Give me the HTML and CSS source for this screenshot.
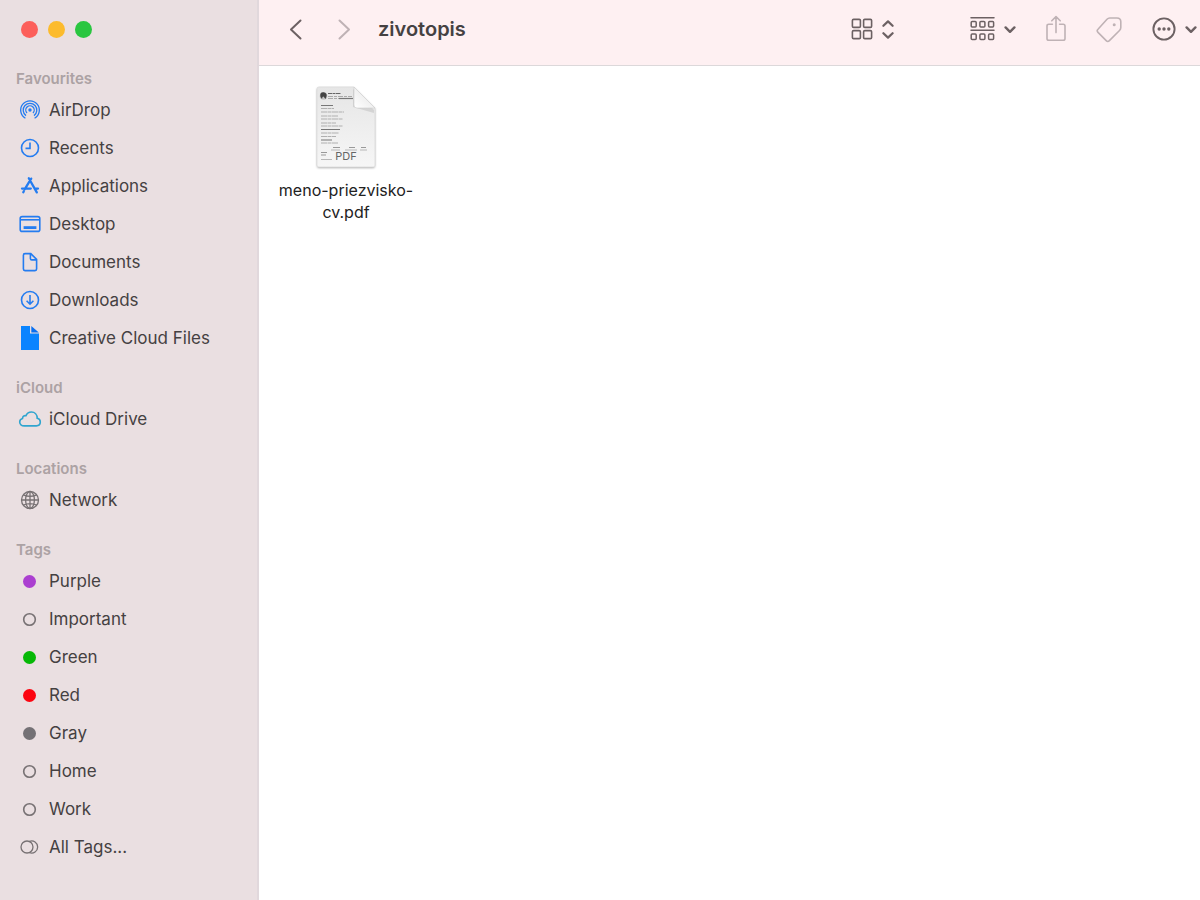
FILE: index.html
```html
<!DOCTYPE html>
<html lang="en">
<head>
<meta charset="utf-8">
<meta name="viewport" content="width=device-width, initial-scale=1">
<title>zivotopis</title>
<link rel="stylesheet" href="styles.css">
</head>
<body>
<div class="window">
  <aside class="sidebar">
    <div class="controls">
      <button class="control close" aria-label="Close"></button>
      <button class="control minimise" aria-label="Minimise"></button>
      <button class="control zoom" aria-label="Zoom"></button>
    </div>
    <nav class="sections">
      <section>
        <h2 class="heading">Favourites</h2>
        <ul class="list">
          <li><a class="item" href="#airdrop"><svg class="icon blue" viewBox="0 0 24 24"><g stroke-width="1.3"><path d="M7.4 20.2A9.3 9.300 0 1 1 16.600 20.200M8 17.600A6.800 6.800 0 1 1 16 17.600M9 15A4.200 4.200 0 1 1 15 15"/></g><circle class="fill" cx="12" cy="12" r="1.700"/></svg>AirDrop</a></li>
          <li><a class="item" href="#recents"><svg class="icon blue" viewBox="0 0 24 24"><circle cx="12" cy="12" r="8.5"/><path d="M12 6.5V12.4H7.5"/></svg>Recents</a></li>
          <li><a class="item" href="#applications"><svg class="icon blue" viewBox="0 0 24 24"><path stroke-width="2.3" stroke-linecap="round" d="M13.2 4.600L6.800 15.200M10.800 4.300L18.800 18.400M4 14.600H12.800M17 14.600H20M5.800 17.200L5.300 18.200"/></svg>Applications</a></li>
          <li><a class="item" href="#desktop"><svg class="icon blue" viewBox="0 0 24 24"><rect x="2.2" y="4.6" width="19.6" height="14.8" rx="2"/><path d="M2.2 7.8H21.8"/><path stroke-width="2.8" d="M5.6 15.6H18.4"/></svg>Desktop</a></li>
          <li><a class="item" href="#documents"><svg class="icon blue" viewBox="0 0 24 24"><path d="M7 3.6H12.8L18.6 9.4V19C18.6 20 18 20.6 17 20.6H7C6 20.6 5.4 20 5.4 19V5.2C5.4 4.2 6 3.6 7 3.6ZM12.4 3.8V8.4C12.4 9.4 12.9 9.9 13.8 9.9H18.4"/></svg>Documents</a></li>
          <li><a class="item" href="#downloads"><svg class="icon blue" viewBox="0 0 24 24"><circle cx="12" cy="12" r="8.5"/><path d="M12 7V16M8.6 12.8L12 16.2L15.4 12.8"/></svg>Downloads</a></li>
          <li><a class="item" href="#creative-cloud"><svg class="icon" viewBox="0 0 24 24"><path fill="#0a84ff" d="M3 0H12V7.5H21V24H3Z"/><path fill="#0a6ff0" d="M13.3 0L20.8 6.5H13.3Z"/></svg>Creative Cloud Files</a></li>
        </ul>
      </section>
      <section>
        <h2 class="heading">iCloud</h2>
        <ul class="list">
          <li><a class="item" href="#icloud-drive"><svg class="icon cyan" viewBox="0 0 24 24"><path d="M6.2 18.9H18.3C20.7 18.9 22.3 17.2 22.3 15.1C22.3 13.1 21 11.6 19.2 11.3C19.2 7.6 16.7 5 13.4 5C10.8 5 9 6.4 8 8.7C6 8.3 4.6 9.6 4.5 11.5C2.8 12 1.7 13.4 1.7 15C1.7 17.2 3.6 18.9 6.2 18.9Z"/></svg>iCloud Drive</a></li>
        </ul>
      </section>
      <section>
        <h2 class="heading">Locations</h2>
        <ul class="list">
          <li><a class="item" href="#network"><svg class="icon grey thin" viewBox="0 0 24 24"><circle cx="12" cy="12" r="8.5"/><ellipse cx="12" cy="12" rx="4.4" ry="8.5"/><path d="M12 3.5V20.5M3.5 12H20.5M5.4 6.8Q12 9.8 18.6 6.8M5.4 17.2Q12 14.2 18.6 17.2"/></svg>Network</a></li>
        </ul>
      </section>
      <section>
        <h2 class="heading">Tags</h2>
        <ul class="list">
          <li><a class="item" href="#purple"><span class="dot purple"></span>Purple</a></li>
          <li><a class="item" href="#important"><svg class="icon grey" viewBox="0 0 24 24"><circle cx="11.5" cy="12.5" r="5.8"/></svg>Important</a></li>
          <li><a class="item" href="#green"><span class="dot green"></span>Green</a></li>
          <li><a class="item" href="#red"><span class="dot red"></span>Red</a></li>
          <li><a class="item" href="#gray"><span class="dot gray"></span>Gray</a></li>
          <li><a class="item" href="#home"><svg class="icon grey" viewBox="0 0 24 24"><circle cx="11.5" cy="12.5" r="5.8"/></svg>Home</a></li>
          <li><a class="item" href="#work"><svg class="icon grey" viewBox="0 0 24 24"><circle cx="11.5" cy="12.5" r="5.8"/></svg>Work</a></li>
          <li><a class="item" href="#all-tags"><svg class="icon grey thin" viewBox="0 0 24 24"><circle cx="9" cy="12" r="6"/><path d="M11.500 6.400A6 6 0 1 1 11.500 17.600"/></svg>All Tags...</a></li>
        </ul>
      </section>
    </nav>
  </aside>
  <div class="content">
    <header class="toolbar">
      <div class="history">
        <button class="tool" aria-label="Back"><svg width="16" height="24" viewBox="0 0 16 24"><path d="M12.5 3.5L3 12.5L12.5 21.5" stroke-width="2"/></svg></button>
        <button class="tool faded" aria-label="Forward"><svg width="16" height="24" viewBox="0 0 16 24"><path d="M3.5 3.5L13 12.5L3.5 21.5" stroke-width="2"/></svg></button>
      </div>
      <h1 class="title">zivotopis</h1>
      <div class="views">
        <button class="tool" aria-label="View as icons"><svg width="22" height="24" viewBox="0 0 22 24"><g stroke-width="1.6"><rect x="1.4" y="2.4" width="8" height="8" rx="1.2"/><rect x="12.6" y="2.4" width="8" height="8" rx="1.2"/><rect x="1.4" y="13.6" width="8" height="8" rx="1.2"/><rect x="12.6" y="13.6" width="8" height="8" rx="1.2"/></g></svg><svg width="12" height="24" viewBox="0 0 12 24"><path stroke-width="2.2" d="M1.4 8.8L6 4.4L10.6 8.8M1.4 16.2L6 20.6L10.6 16.2"/></svg></button>
        <button class="tool" aria-label="Group"><svg width="25" height="26" viewBox="0 0 25 26"><g stroke-width="1.5"><path d="M1 1.800H24M1 14.300H24"/><rect x="1.2" y="5.600" width="5" height="5.4" rx="1"/><rect x="9.9" y="5.600" width="5" height="5.4" rx="1"/><rect x="18.6" y="5.600" width="5" height="5.4" rx="1"/><rect x="1.2" y="18" width="5" height="5.4" rx="1"/><rect x="9.9" y="18" width="5" height="5.4" rx="1"/><rect x="18.6" y="18" width="5" height="5.4" rx="1"/></g></svg><svg width="12" height="24" viewBox="0 0 12 24"><path stroke-width="2.4" d="M1.6 10.4L6 14.8L10.4 10.4"/></svg></button>
      </div>
      <div class="actions">
        <button class="tool faded" aria-label="Share"><svg width="20" height="28" viewBox="0 0 20 28"><path stroke-width="1.6" d="M6.4 9.200H2.8C1.6 9.200 1 9.800 1 11V23.400C1 24.600 1.6 25.200 2.8 25.200H17.2C18.4 25.200 19 24.600 19 23.400V11C19 9.800 18.4 9.200 17.2 9.200H13.6M10 17.600V1.800M5.8 5.800L10 1.600L14.2 5.800"/></svg></button>
        <button class="tool faded" aria-label="Tags"><svg width="26" height="28" viewBox="0 0 26 28"><path stroke-width="1.6" d="M13.8 3H21C23.4 3 24.8 4.4 24.8 6.8V12.4C24.8 13.8 24.4 14.6 23.5 15.5L13.4 25.6C12.3 26.7 11.3 26.7 10.2 25.6L2 17.4C.9 16.3 .9 15.3 2 14.2L11 4.3C11.8 3.4 12.6 3 13.8 3Z"/><circle class="fill" cx="18.2" cy="9.800" r="1.5"/></svg></button>
        <button class="tool" aria-label="More"><svg width="24" height="24" viewBox="0 0 24 24"><circle cx="12" cy="12" r="10.6" stroke-width="1.9"/><circle class="fill" cx="7.2" cy="12" r="1.7"/><circle class="fill" cx="12" cy="12" r="1.7"/><circle class="fill" cx="16.8" cy="12" r="1.7"/></svg><svg width="12" height="24" viewBox="0 0 12 24"><path stroke-width="2.4" d="M1.6 10.4L6 14.8L10.4 10.4"/></svg></button>
      </div>
    </header>
    <main class="files">
      <a class="file" href="#meno-priezvisko-cv">
        <svg class="thumb" width="64" height="88" viewBox="0 0 64 88">
          <defs>
            <linearGradient id="fold" x1="0" y1="1" x2="1" y2="0"><stop offset="0" stop-color="#fff"/><stop offset=".5" stop-color="#f0f0f0"/><stop offset="1" stop-color="#ccc"/></linearGradient>
            <linearGradient id="paper" x1="0" y1="0" x2="0" y2="1"><stop offset="0" stop-color="#e6e6e6"/><stop offset="1" stop-color="#f6f6f6"/></linearGradient>
          </defs>
          <path class="page-shadow" d="M5 4H40L61 25V82Q61 84 59 84H5Q3 84 3 82V6Q3 4 5 4Z"/>
          <path fill="url(#paper)" stroke="#d8d8d8" stroke-width=".7" d="M5 4H40L61 25V82Q61 84 59 84H5Q3 84 3 82V6Q3 4 5 4Z"/>
          <circle cx="9.5" cy="13" r="3.8" fill="#c4c4c4"/>
          <path fill="#444" d="M6.500 14Q5.300 9 9.500 9.200Q13.500 10 12.500 13.500L11.500 16L9.500 13.500L8.500 14L8 16Z"/>
          <g fill="none" stroke="#888" stroke-width="1.200">
            <path d="M14 10.500H27" stroke="#666" stroke-dasharray="4 .5 3 .5"/>
            <path d="M14 13.500H38M14 15.500H26" stroke="#aaa" stroke-dasharray="5 1 3 1"/>
            <path d="M25 15.500H39" stroke="#777"/>
            <path d="M7 22.500H19M7 46.500H26M7 57H18" stroke="#777"/>
            <path d="M7 25.500H20M7 29H30M7 33H24M7 36H29M7 40H22M7 43H29M7 50H25M7 53.500H22M7 60H24" stroke="#b0b0b0" stroke-dasharray="6 .5 4 .5"/>
            <path d="M19 64.500H26M35 64.500H41M47 64.500H52M7 69.500H13M7 72H12" stroke="#999"/>
            <path d="M17 67H26M31 67H43M46 67H53M7 76.500H18" stroke="#b8b8b8"/>
          </g>
          <path fill="#777" opacity=".2" d="M39 6L60 27V30L39 24Z"/>
          <path fill="url(#fold)" stroke="#ccc" stroke-width=".6" d="M40 4L61 25H43Q40 25 40 22Z"/>
          <text class="kind" x="32" y="77" text-anchor="middle">PDF</text>
        </svg>
        <span class="name">meno-priezvisko-cv.pdf</span>
      </a>
    </main>
  </div>
</div>
</body>
</html>
```
FILE: styles.css
```css
* {
  box-sizing: border-box;
}

body {
  margin: 0;
  font-family: Inter, "Liberation Sans", sans-serif;
  color: #454142;
  background: #fff;
}

a {
  color: inherit;
  text-decoration: none;
}

button {
  padding: 0;
  border: 0;
  background: none;
  font: inherit;
}

svg {
  display: block;
  flex: none;
}

.window {
  display: flex;
  min-height: 100vh;
}

.sidebar {
  flex: none;
  width: 259px;
  padding: 21px 16px 32px;
  background: #eadfe1;
  border-right: 2px solid #e1d8dc;
}

.controls {
  display: flex;
  gap: 10px;
  padding-left: 5px;
}

.control {
  width: 17px;
  height: 17px;
  border-radius: 50%;
}

.close { background: #fc5f5a; }
.minimise { background: #fcbb2d; }
.zoom { background: #2ac640; }

.sections {
  display: flex;
  flex-direction: column;
  gap: 18px;
  margin-top: 28px;
}

.heading {
  margin: 0;
  font-size: 15px;
  font-weight: 600;
  line-height: 25px;
  color: #aca2a4;
}

.list {
  margin: 0;
  padding: 0;
  list-style: none;
}

.item {
  display: flex;
  align-items: center;
  gap: 7px;
  height: 38px;
  padding-left: 2px;
  font-size: 17px;
  white-space: nowrap;
}

.icon {
  width: 24px;
  height: 24px;
  fill: none;
  stroke-width: 1.6;
}

.blue { stroke: #247cf0; color: #247cf0; }
.cyan { stroke: #30a5cf; }
.grey { stroke: #777173; }
.thin { stroke-width: 1.3; }

.fill {
  fill: currentColor;
  stroke: none;
}

.dot {
  width: 13px;
  height: 13px;
  margin: 0 6px 0 5px;
  border-radius: 50%;
}

.purple { background: #ab3fd0; }
.green { background: #06b806; }
.red { background: #fc0510; }
.gray { background: #747175; }

.content {
  flex: 1;
  min-width: 0;
}

.toolbar {
  display: flex;
  align-items: center;
  height: 66px;
  padding: 0 3px 8px 29px;
  background: #fef0f2;
  border-bottom: 1px solid #dcd8da;
}

.history {
  display: flex;
  gap: 32px;
}

.title {
  margin: 0 auto 0 26px;
  font-size: 20px;
  font-weight: 600;
}

.views {
  display: flex;
  align-items: center;
  gap: 76px;
}

.actions {
  display: flex;
  align-items: center;
  gap: 30px;
  margin-left: 30px;
}

.tool {
  display: flex;
  align-items: center;
  gap: 9px;
  color: #6c6163;
}

.tool svg {
  fill: none;
  stroke: currentColor;
  stroke-linecap: round;
  stroke-linejoin: round;
}

.tool .fill {
  fill: currentColor;
  stroke: none;
}

.faded {
  color: #bfb2b5;
}

.files {
  display: flex;
  flex-wrap: wrap;
  padding: 17px 16px;
}

.file {
  display: flex;
  flex-direction: column;
  align-items: center;
  gap: 8px;
  width: 142px;
}

.page-shadow {
  fill: #fff;
  filter: drop-shadow(0 1px 1px #0005);
}

.kind {
  font-size: 11px;
  fill: #666;
}

.name {
  font-size: 16px;
  line-height: 22px;
  text-align: center;
  color: #222;
}
```
